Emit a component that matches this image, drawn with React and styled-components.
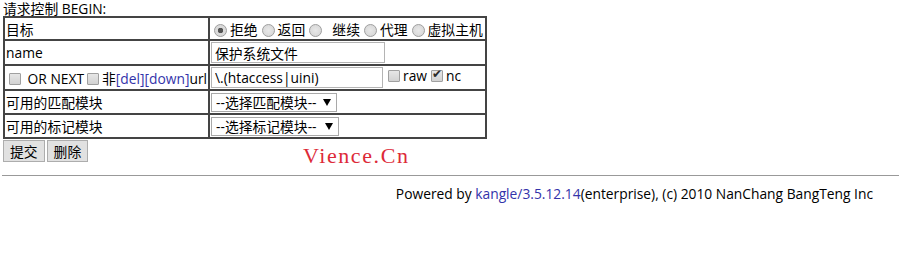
import React from 'react';
import styled, {createGlobalStyle} from 'styled-components';

const GlobalStyle = createGlobalStyle`
    body {
        margin: 0;
        padding: 1px 3px;
        font-family: "Open Sans", "Noto Sans CJK SC", sans-serif;
        font-size: 13.8px;
        color: #000;
        background: #fff;
    }
`;

const Title = styled.div`
    line-height: 15px;
    height: 15px;
`;

const FormTable = styled.table`
    border-collapse: collapse;
    table-layout: fixed;
    border: 2px solid #444;
    width: 484px;
    td {
        border: 2px solid #444;
        padding: 0 1px;
        height: 21px;
        white-space: nowrap;
        overflow: hidden;
    }
    td:first-child {
        width: 201px;
    }
`;

const TextInput = styled.input`
    font: inherit;
    width: ${p => p.$width}px;
    height: 21px;
    box-sizing: border-box;
    border: 1px solid #b4b4b4;
    padding: 0 3px;
    margin: 1px 0;
    vertical-align: middle;
`;

const SelectWrap = styled.span`
    position: relative;
    display: inline-block;
    margin: 1px 0;
    vertical-align: middle;
    &::after {
        content: '';
        position: absolute;
        right: 6px;
        top: 6px;
        border-left: 4px solid transparent;
        border-right: 4px solid transparent;
        border-top: 7px solid #000;
        pointer-events: none;
    }
`;

const Select = styled.select`
    appearance: none;
    font: inherit;
    width: ${p => p.$width}px;
    height: 19px;
    box-sizing: border-box;
    border: 1px solid #a9a9a9;
    border-radius: 0;
    background: #fff;
    padding: 0 2px 0 4px;
    line-height: 17px;
    display: block;
`;

const Radio = styled.input`
    appearance: none;
    width: 13px;
    height: 13px;
    margin: 0 3px 0 ${p => p.$ml || 4}px;
    border: 1px solid #a0a0a0;
    border-radius: 50%;
    background: radial-gradient(circle, #e8e8e8 0, #d4d4d4 100%);
    vertical-align: -2px;
    box-sizing: border-box;
    &:checked {
        background: radial-gradient(circle, #555 0, #555 2.5px, #dadada 3px, #dadada 100%);
    }
`;

const Check = styled.input`
    appearance: none;
    width: 12px;
    height: 12px;
    margin: 0 3px 0 ${p => p.$ml || 4}px;
    border: 1px solid #a0a0a0;
    border-radius: 1px;
    background: linear-gradient(#e6e6e6, #d2d2d2);
    vertical-align: -1px;
    box-sizing: border-box;
    position: relative;
    overflow: visible;
    &:checked::after {
        content: '✔';
        position: absolute;
        left: 0px;
        top: -5px;
        font-size: 12px;
        line-height: 16px;
        color: #2a2a2a;
        font-family: "DejaVu Sans", sans-serif;
    }
`;

const Blue = styled.a`
    color: #3333aa;
    text-decoration: none;
`;

const Buttons = styled.div`
    display: flex;
    gap: 2px;
    margin-top: 1px;
`;

const Button = styled.button`
    font: inherit;
    height: 22px;
    padding: 0 6px;
    border: 1px solid #adadad;
    background: #e1e1e1;
`;

const Watermark = styled.div`
    font-family: "Liberation Serif", serif;
    font-size: 22px;
    letter-spacing: 1.6px;
    color: #dd2a38;
    margin: -19px 0 0 300px;
    height: 26px;
    line-height: 26px;
`;

const Rule = styled.hr`
    border: none;
    border-top: 1px solid #999;
    margin: 6px -1px 0 -1px;
`;

const Footer = styled.div`
    text-align: right;
    padding: 8px 25px 0 0;
`;

const radios = ['拒绝', '返回', '\u00a0 继续', '代理', '虚拟主机'];

export default function App() {
    return (
        <>
            <GlobalStyle />
            <Title>请求控制 BEGIN:</Title>
            <FormTable>
                <tbody>
                    <tr>
                        <td>目标</td>
                        <td>
                            {radios.map((r, i) => (
                                <label key={r}>
                                    <Radio type="radio" name="action" defaultChecked={i === 0} $ml={i === 0 ? 3 : 4} />
                                    {r}
                                </label>
                            ))}
                        </td>
                    </tr>
                    <tr>
                        <td>name</td>
                        <td><TextInput $width={174} defaultValue="保护系统文件" /></td>
                    </tr>
                    <tr>
                        <td>
                            <Check type="checkbox" $ml={3} /> OR NEXT
                            <Check type="checkbox" $ml={3} />非<Blue>[del]</Blue><Blue>[down]</Blue>url
                        </td>
                        <td>
                            <TextInput $width={172} defaultValue="\.(htaccess|uini)" />
                            <Check type="checkbox" $ml={5} />raw
                            <Check type="checkbox" $ml={4} defaultChecked />nc
                        </td>
                    </tr>
                    <tr>
                        <td>可用的匹配模块</td>
                        <td>
                            <SelectWrap>
                                <Select $width={126}><option>--选择匹配模块--</option></Select>
                            </SelectWrap>
                        </td>
                    </tr>
                    <tr>
                        <td>可用的标记模块</td>
                        <td>
                            <SelectWrap>
                                <Select $width={128}><option>--选择标记模块--</option></Select>
                            </SelectWrap>
                        </td>
                    </tr>
                </tbody>
            </FormTable>
            <Buttons>
                <Button>提交</Button>
                <Button>删除</Button>
            </Buttons>
            <Watermark>Vience.Cn</Watermark>
            <Rule />
            <Footer>
                Powered by <Blue>kangle/3.5.12.14</Blue>(enterprise), (c) 2010 NanChang BangTeng Inc
            </Footer>
        </>
    );
}
